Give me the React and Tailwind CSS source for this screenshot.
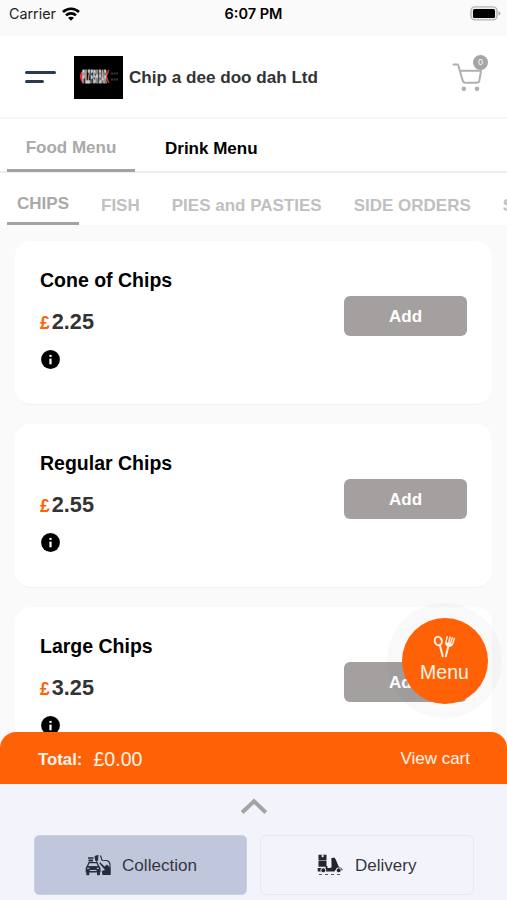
const items = [
  { name: 'Cone of Chips', price: '2.25' },
  { name: 'Regular Chips', price: '2.55' },
  { name: 'Large Chips', price: '3.25' },
];

function Wifi() {
  return (
    <svg className="h-[14px] w-[18px]" viewBox="0 0 18 14" fill="none" stroke="#000" strokeWidth="2.6">
      <path d="M1 5C5.500 .7 12.500 .7 17 5" />
      <path d="M4 8.400C6.800 5.700 11.200 5.700 14 8.400" />
      <path d="M9 13.800L6 10.800C7.800 9.300 10.200 9.300 12 10.800Z" fill="#000" stroke="none" />
    </svg>
  );
}

function Battery() {
  return (
    <svg className="h-[15px] w-[31px]" viewBox="0 0 31 15">
      <rect x="1" y="0.9" width="26" height="13" rx="4" fill="#eee" stroke="#b5b5b5" strokeWidth="1.4" />
      <rect x="3" y="2.900" width="22" height="9" rx="1.5" fill="#000" />
      <path d="M28.500 5.200C31 6 31 8.800 28.500 9.600Z" fill="#a9a9a9" />
    </svg>
  );
}

function Logo() {
  return (
    <svg className="ml-[18px] mt-px h-[43px] w-[49px]" viewBox="0 0 49 43">
      <rect width="49" height="43" fill="#000" />
      <path d="M9.500 14C4.800 16 4.800 25 9.500 27Z" fill="#d9363c" />
      <path d="M34.800 14L32.300 20.500L34.800 27" fill="none" stroke="#d9363c" strokeWidth="1.4" />
      <text transform="translate(8.500 27) scale(.175 1)" fontSize="19" fontWeight="bold" fontFamily="Liberation Sans, sans-serif" fill="#d6d6d6" stroke="#d6d6d6" strokeWidth="1.200">PILZ FISH BAR</text>
      <path d="M37 17.500H44M37 23.500H44" stroke="#383838" strokeWidth="2" strokeDasharray="2 .6" />
    </svg>
  );
}

function Cart() {
  return (
    <svg className="h-[30px] w-[32px]" viewBox="0 0 32 30" fill="none" stroke="#b0b0b0" strokeWidth="2" strokeLinecap="round" strokeLinejoin="round">
      <path d="M1.500 2.500H6L10.700 18.500Q11.300 20.700 13.300 20.700H24.700Q26.800 20.700 27.300 18.700L29 8.800H8" />
      <circle cx="11.800" cy="26.800" r="2.300" fill="#b0b0b0" stroke="none" />
      <circle cx="25" cy="26.800" r="2.300" fill="#b0b0b0" stroke="none" />
    </svg>
  );
}

function Info() {
  return (
    <svg className="ml-px mt-[15px] block h-[19px] w-[19px]" viewBox="0 0 19 19">
      <circle cx="9.500" cy="9.500" r="9.400" fill="#000" />
      <rect x="8.400" y="4.900" width="2.200" height="2" fill="#fff" />
      <rect x="8.400" y="8.600" width="2.200" height="5.700" fill="#fff" />
    </svg>
  );
}

function Cutlery() {
  return (
    <svg className="h-[23px] w-[23px]" viewBox="0 0 23 23" fill="none" stroke="#fff4eb" strokeWidth="1.900" strokeLinecap="round" strokeLinejoin="round">
      <ellipse cx="5.300" cy="6" rx="3.500" ry="4.300" transform="rotate(-15 5.300 6)" />
      <path d="M7 10.800L9.700 21.300" strokeWidth="2" />
      <path d="M14.200 1.700L12.900 7.200Q12.500 10.300 15.400 11Q18.500 11.800 19.700 8.700L21.400 3.300M17 2L15.800 8M19.300 2.600L17.700 8.300" strokeWidth="1.400" />
      <path d="M13.800 8.500L18.500 9.600L16 11Z" fill="#fff4eb" />
      <path d="M15.400 11L12.800 21.300" strokeWidth="2" />
    </svg>
  );
}

function CollectionIcon() {
  return (
    <svg className="h-[22px] w-[26px]" viewBox="0 0 26 22" fill="#252c3f">
      <path d="M3 3.200H8.500V4.800H3ZM3.500 5.500H8V7.500H3.500ZM9.500 2L13.500 .8L13 6.500L11.500 8L10 6Z" />
      <path d="M4 8.700H12L14 13H2Z" fill="none" stroke="#252c3f" strokeWidth="1.300" />
      <path d="M2 12.200H14.300L15.500 14V18.500H.7V14Z" />
      <rect x="1.300" y="18" width="3" height="3.300" rx=".7" />
      <rect x="12" y="18" width="3" height="3.300" rx=".7" />
      <path d="M4.700 16.500H11.500M2 14.300H4.500M11.700 14.300H14" stroke="#c0c7dd" strokeWidth="1" />
      <path d="M15.500 1.500L17 6.200L22 6.500Q25 7.500 25 11V20.500" fill="none" stroke="#252c3f" strokeWidth="1.100" />
      <path d="M15 8L19.500 12.500L22 10.500L25.500 14V21H17.500L16.700 17L20 16L14.500 9.500Z" />
    </svg>
  );
}

function DeliveryIcon() {
  return (
    <svg className="h-[22px] w-[26px]" viewBox="0 0 26 22" fill="#25262c">
      <path d="M1.500 .7H9.500V6.500H1.500ZM1.500 7.100H9.500V12.700H1.500Z" />
      <path d="M4.700 .7V3.200H6.500V.7" fill="#f3f4fb" />
      <path d="M.7 14H12.500L14.500 13.500V5L14 4.200L17.500 3.500L19.500 8.200L21.500 12.300L25.500 15V16.300H22.500L19.500 14.500L17.500 17.500H.7Z" />
      <path d="M14.800 4.500Q18.500 3.500 19.500 7.500L21.500 12.500L15 11Z" />
      <path d="M9.500 12V15.500H15.500" fill="none" stroke="#25262c" strokeWidth="1.800" />
      <circle cx="6.300" cy="16.300" r="2.500" stroke="#f3f4fb" strokeWidth="1" />
      <circle cx="21.700" cy="16.300" r="2.500" stroke="#f3f4fb" strokeWidth="1" />
      <path d="M2 20.500H25" stroke="#555" strokeWidth="1" strokeDasharray="3 3" />
    </svg>
  );
}

export default function App() {
  return (
    <div className="relative flex h-[900px] w-[507px] flex-col overflow-hidden bg-[#fafafa] font-['Liberation_Sans',sans-serif] text-[17px] leading-5">
      <div className="grid h-9 shrink-0 grid-cols-3 items-start px-[9px] pt-1 font-[Inter,sans-serif] text-[14px] text-[#222]">
        <div className="flex items-center gap-[6px]">
          <span className="text-[14.300px]">Carrier</span>
          <Wifi />
        </div>
        <span className="text-center text-[14.500px] font-semibold text-black">6:07 PM</span>
        <div className="-mr-[3px] flex justify-end pt-[2px]"><Battery /></div>
      </div>

      <header className="flex h-[83px] shrink-0 items-center border-b-2 border-[#f7f7f7] bg-white pl-[25px] pr-[23px]">
        <div className="flex w-[31px] flex-col gap-[6px]">
          <div className="h-[3px] w-[31px] rounded-full bg-[#2d3a4e]" />
          <div className="h-[3px] w-[19px] rounded-full bg-[#2d3a4e]" />
        </div>
        <Logo />
        <h1 className="ml-[6px] flex-1 pt-[2px] text-[17.100px] font-bold text-[#333]">Chip a dee doo dah Ltd</h1>
        <div className="relative">
          <Cart />
          <span className="absolute -top-[7px] left-[21px] flex h-[15px] w-[15px] items-center justify-center rounded-full bg-[#a5a5a5] text-[9px] leading-none text-white">0</span>
        </div>
      </header>

      <nav className="flex h-[54px] shrink-0 border-b-2 border-[#eee] bg-white pl-[7px] font-bold">
        <div className="h-[53px] w-32 border-b-[3px] border-[#a5a1a1] pt-[19px] text-center text-[#a9a9a9]">Food Menu</div>
        <div className="ml-[30px] pt-[20px] text-black">Drink Menu</div>
      </nav>
      <nav className="flex h-[52px] shrink-0 overflow-hidden whitespace-nowrap bg-white pl-[7px] font-bold text-[#c0c0c0]">
        <div className="h-[52px] w-[72px] shrink-0 border-b-[3px] border-[#a5a1a1] pt-[21px] text-center text-[#a9a9a9]">CHIPS</div>
        <div className="ml-[22px] flex gap-8 pt-[23px]">
          <span>FISH</span>
          <span>PIES and PASTIES</span>
          <span>SIDE ORDERS</span>
          <span>SAUCES</span>
        </div>
      </nav>

      <main className="flex min-h-0 flex-1 flex-col gap-[19px] overflow-hidden px-[15px] pt-4">
        {items.map((item) => (
          <article key={item.name} className="flex h-[164px] shrink-0 justify-between rounded-2xl border-b border-[#f2f2f2] bg-white pl-[25px] pr-[25px]">
            <div className="pt-[29px]">
              <h2 className="text-[19.500px] font-bold text-black">{item.name}</h2>
              <p className="mt-[20px] flex items-baseline gap-[2px] font-bold leading-6">
                <span className="text-[17.500px] text-[#ff6206]">£</span>
                <span className="text-[21.700px] text-[#333]">{item.price}</span>
              </p>
              <Info />
            </div>
            <button className="mt-[55px] h-10 w-[123px] rounded-md bg-[#a5a0a0] pt-[2px] font-bold text-white">Add</button>
          </article>
        ))}
      </main>

      <div className="flex h-[52px] shrink-0 items-center rounded-t-2xl bg-[#ff6206] pl-[38px] pr-[37px] text-[#fff4eb]">
        <span className="pt-[3px] text-[16.800px] font-bold">Total:</span>
        <span className="ml-[11px] flex-1 pt-[2px] text-[19.600px]">£0.00</span>
        <span className="pt-[2px]">View cart</span>
      </div>
      <footer className="flex h-[116px] shrink-0 flex-col items-center bg-[#f3f4fb] text-[#36373d]">
        <svg className="mt-[13px] h-[20px] w-[28px] shrink-0" viewBox="0 0 28 20" fill="none" stroke="#a3a3a3" strokeWidth="4">
          <path d="M2.200 15.500L14 4.300L25.800 15.500" />
        </svg>
        <div className="mt-[18px] flex w-full gap-[13px] pl-[34px] pr-[33px]">
          <button className="flex h-[60px] w-[213px] items-center rounded-[5px] border border-[#cbd0e3] bg-[#c0c7dd] pl-[50px]">
            <CollectionIcon />
            <span className="ml-[11px] pt-px text-[17.100px]">Collection</span>
          </button>
          <button className="flex h-[60px] w-[214px] items-center rounded-md border border-[#e8e8ed] pl-[56px]">
            <DeliveryIcon />
            <span className="ml-[12px] pt-px">Delivery</span>
          </button>
        </div>
      </footer>

      <div className="absolute left-[387px] top-[603px] flex h-[115px] w-[115px] items-center justify-center rounded-full bg-black/[0.025]">
        <button className="flex h-[86px] w-[86px] flex-col items-center rounded-full bg-[#ff6206] pt-[17px] text-[19.500px] text-[#fff4eb]">
          <Cutlery />
          <span className="mt-[4px]">Menu</span>
        </button>
      </div>
    </div>
  );
}
